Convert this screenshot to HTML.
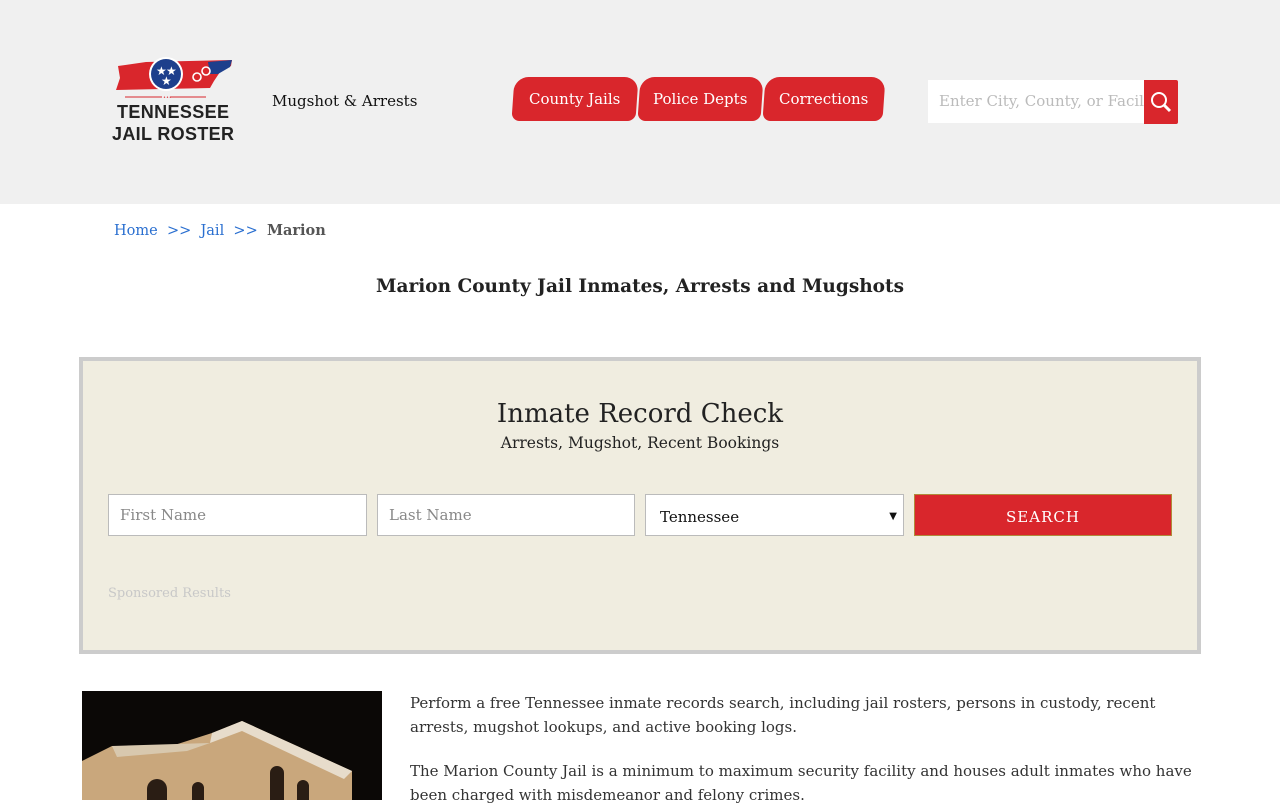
<!DOCTYPE html>
<html><head><meta charset="utf-8"><style>
*{box-sizing:border-box;margin:0;padding:0}
body{width:1280px;height:800px;overflow:hidden;font-family:"DejaVu Serif","Liberation Serif",serif;background:#fff;color:#222}
.hdr{height:204px;background:#f0f0f0;position:relative}
.tagline{position:absolute;left:272px;top:92px;font-size:15px;color:#111}
.nav a{position:absolute;top:77px;height:44px;background:#d9262c;color:#fff;font-size:15px;line-height:44px;text-align:center;border-radius:14px 14px 8px 8px;text-decoration:none;transform:skewX(-4deg)}
.nav a span{display:inline-block;transform:skewX(4deg)}
.srch{position:absolute;left:928px;top:80px;width:216px;height:43px;background:#fff;color:#bbb;font-size:15px;line-height:43px;padding-left:11px;white-space:nowrap;overflow:hidden}
.sbtn{position:absolute;left:1144px;top:80px;width:34px;height:44px;background:#d9262c;border-radius:0 2px 2px 0}
.bc{position:absolute;top:222px;left:114px;font-size:14.5px}
.bc a{color:#2a6fd0;text-decoration:none}
h1{position:absolute;top:276px;width:100%;text-align:center;font-size:18.5px;font-weight:bold;color:#222}
.box{position:absolute;left:79px;top:357px;width:1122px;height:297px;background:#f0ede0;border:4px solid #ccc}
.box h2{position:absolute;top:38px;width:100%;text-align:center;font-weight:normal;font-size:26px;color:#222}
.box .sub{position:absolute;top:73px;width:100%;text-align:center;font-size:15.5px}
.in{position:absolute;top:133px;height:42px;background:#fff;border:1px solid #bbb;font-size:15px;color:#888;line-height:40px;padding-left:11px}
.go{position:absolute;top:133px;left:831px;width:258px;height:42px;background:#d9262c;color:#fff;font-size:15px;letter-spacing:1px;text-align:center;line-height:44px;border:1px solid #b08a3a}
.sp{position:absolute;top:225px;left:25px;font-size:13px;color:#c8c8c8}
.img{position:absolute;left:82px;top:691px;width:300px;height:109px;background:#0b0806;overflow:hidden}
.p{position:absolute;left:410px;font-size:15px;line-height:24px;color:#333;width:790px}
</style></head><body>
<div class="hdr">
<svg style="position:absolute;left:110px;top:56px" width="130" height="90" viewBox="0 0 130 90">
<path d="M8 10 L36 6 L122 4 L121 10 L110 16 L104 25 L100 32 L6 34 L10 22 Z" fill="#d9262c"/>
<path d="M98 6 L122 4 L120 11 L108 18 L100 18Z" fill="#1d3f8c"/>
<circle cx="56" cy="18" r="17" fill="#fff"/><circle cx="56" cy="18" r="15" fill="#1d3f8c"/>
<text x="46" y="19" fill="#fff" font-size="12">★</text><text x="56" y="19" fill="#fff" font-size="12">★</text><text x="51" y="29" fill="#fff" font-size="12">★</text>
<circle cx="87" cy="21" r="4" fill="none" stroke="#fff" stroke-width="1.6"/><circle cx="96" cy="15" r="4" fill="none" stroke="#fff" stroke-width="1.6"/>
<path d="M15 41 H52 M60 41 H96" stroke="#d9262c" stroke-width="1"/><text x="53" y="43" font-size="5" fill="#d9262c">•••</text>
<text x="63" y="62" text-anchor="middle" font-family="Liberation Sans,sans-serif" font-weight="bold" font-size="18" fill="#222" textLength="112">TENNESSEE</text>
<text x="63" y="84" text-anchor="middle" font-family="Liberation Sans,sans-serif" font-weight="bold" font-size="18" fill="#222" textLength="122">JAIL ROSTER</text>
</svg>
<div class="tagline">Mugshot &amp; Arrests</div>
<div class="nav"><a style="left:513px;width:124px"><span>County Jails</span></a><a style="left:639px;width:123px"><span>Police Depts</span></a><a style="left:764px;width:120px"><span>Corrections</span></a></div>
<div class="srch">Enter City, County, or Facil</div>
<div class="sbtn"><svg width="34" height="44" viewBox="0 0 34 44"><circle cx="15" cy="20" r="7" fill="none" stroke="#fff" stroke-width="2"/><path d="M20 25 L26 31" stroke="#fff" stroke-width="3"/></svg></div>
</div>
<div class="bc"><a>Home</a> &nbsp;<a>&gt;&gt;</a>&nbsp; <a>Jail</a> &nbsp;<a>&gt;&gt;</a>&nbsp; <b style="color:#555">Marion</b></div>
<h1>Marion County Jail Inmates, Arrests and Mugshots</h1>
<div class="box">
<h2>Inmate Record Check</h2>
<div class="sub">Arrests, Mugshot, Recent Bookings</div>
<div class="in" style="left:25px;width:259px">First Name</div>
<div class="in" style="left:294px;width:258px">Last Name</div>
<div class="in" style="left:562px;width:259px;color:#111;line-height:44px;padding-left:14px">Tennessee<span style="position:absolute;right:6px;font-size:10px">▼</span></div>
<div class="go">SEARCH</div>
<div class="sp">Sponsored Results</div>
</div>
<div class="img"><svg width="300" height="109"><path d="M0 70 L30 55 L80 58 L130 42 L160 30 L270 80 L270 109 L0 109Z" fill="#c9a77c"/><path d="M130 42 L160 30 L270 80 L262 88 L160 40 L128 52Z" fill="#e7dccb"/><path d="M30 55 L128 52 L105 60 L35 66Z" fill="#d8c8ae"/><path d="M65 109 V98 a10 10 0 0 1 20 0 V109Z M110 109 V97 a6 6 0 0 1 12 0 V109Z M188 109 V82 a7 7 0 0 1 14 0 V109Z M215 109 V95 a6 6 0 0 1 12 0V109Z" fill="#2a1d14"/></svg></div>
<div class="p" style="top:691px">Perform a free Tennessee inmate records search, including jail rosters, persons in custody, recent arrests, mugshot lookups, and active booking logs.</div>
<div class="p" style="top:759px">The Marion County Jail is a minimum to maximum security facility and houses adult inmates who have been charged with misdemeanor and felony crimes.</div>
</body></html>
